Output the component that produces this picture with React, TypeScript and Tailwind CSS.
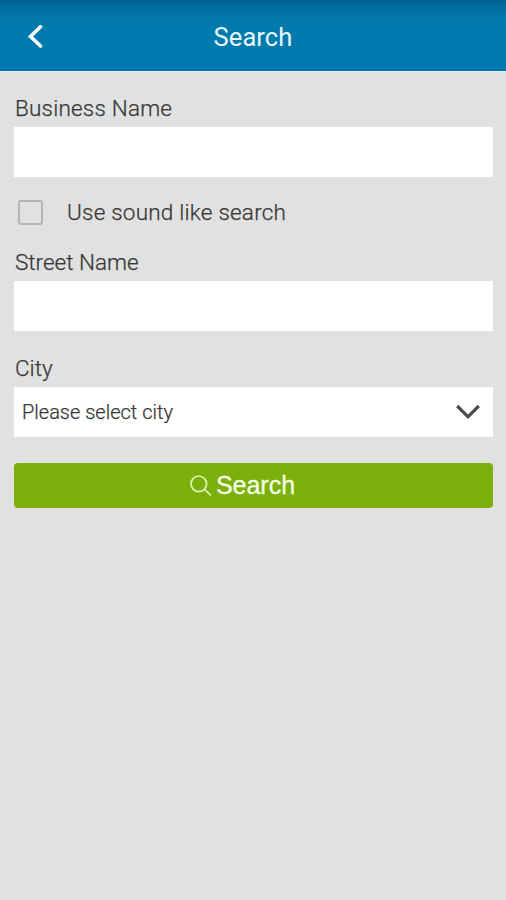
import { FormEvent, useState } from "react";

interface TextFieldProps {
  id: string;
  label: string;
  value: string;
  className: string;
  labelClassName: string;
  onChange: (value: string) => void;
}

function TextField({ id, label, value, className, labelClassName, onChange }: TextFieldProps) {
  return (
    <div className={className}>
      <label htmlFor={id} className={`block h-[30px] pl-px text-[22.5px] leading-[30px] ${labelClassName}`}>
        {label}
      </label>
      <input
        id={id}
        value={value}
        onChange={(event) => onChange(event.target.value)}
        className="mt-1 block h-[50px] w-full bg-white px-2 text-xl outline-none"
      />
    </div>
  );
}

export default function App() {
  const [businessName, setBusinessName] = useState("");
  const [streetName, setStreetName] = useState("");
  const [soundLike, setSoundLike] = useState(false);

  const handleSubmit = (event: FormEvent) => event.preventDefault();

  return (
    <div className="min-h-screen bg-[#e1e1e1] font-['Roboto',sans-serif] font-light text-[#383838] [-webkit-text-stroke:0.25px_#383838]">
      <header className="grid h-[72px] grid-cols-[1fr_auto_1fr] items-center border-b border-[#e8ebf4] bg-[linear-gradient(#005e90_0px,#00699b_4px,#0074a5_12px,#007aad_24px,#007aad_69px,#0070a5_71px)] pt-0.5">
        <button type="button" aria-label="Back" className="ml-[26px] w-5">
          <svg width="20" height="24" viewBox="0 0 20 24" fill="none" stroke="#fff" strokeWidth="3.6" strokeLinecap="round">
            <path d="M14.5 1.8 L4.5 11.5 L14.5 21" />
          </svg>
        </button>
        <h1 className="text-[25.5px] font-normal leading-8 tracking-[0.1px] text-[#e8f7ff] [-webkit-text-stroke:0px]">Search</h1>
      </header>

      <form onSubmit={handleSubmit} className="flex flex-col pr-[13px] pl-[14px]">
        <TextField
          id="business"
          label="Business Name"
          value={businessName}
          onChange={setBusinessName}
          className="mt-[21px]"
          labelClassName="tracking-[0.2px]"
        />
        <label className="mt-5 flex h-[30px] items-center pl-1 text-[22.5px] leading-[30px] tracking-[0.22px]">
          <input
            type="checkbox"
            checked={soundLike}
            onChange={(event) => setSoundLike(event.target.checked)}
            className="mr-6 size-[25px] appearance-none rounded-[3px] border-2 border-[#b5b5b5] checked:bg-[#b5b5b5]"
          />
          Use sound like search
        </label>
        <TextField
          id="street"
          label="Street Name"
          value={streetName}
          onChange={setStreetName}
          className="mt-5"
          labelClassName="tracking-normal"
        />
        <span className="mt-[22px] h-[30px] pl-px text-[22.5px] leading-[30px]">City</span>
        <button
          type="button"
          className="mt-1 flex h-[50px] items-center justify-between bg-white pr-[13px] pl-2 text-left text-xl"
        >
          Please select city
          <svg width="24" height="16" viewBox="0 0 24 16" fill="none" stroke="#4c4c4c" strokeWidth="3.2">
            <path d="M1.2 2 L12 12.8 L22.8 2" />
          </svg>
        </button>
        <button
          type="submit"
          className="mt-[26px] flex h-[45px] items-center justify-center gap-1 rounded-[4px] bg-[#7bb00a] pr-[22px] font-['Liberation_Sans',sans-serif] text-[25px] font-normal text-[#f4ffe4]"
        >
          <svg width="22" height="22" viewBox="0 0 22 22" fill="none" stroke="#dcf5b4" strokeWidth="1.7">
            <circle cx="8.8" cy="8.8" r="7.8" />
            <path d="M14.5 14.3 L21 20.5" />
          </svg>
          <span className="[-webkit-text-stroke:0.3px_#f4ffe4]">Search</span>
        </button>
      </form>
    </div>
  );
}
